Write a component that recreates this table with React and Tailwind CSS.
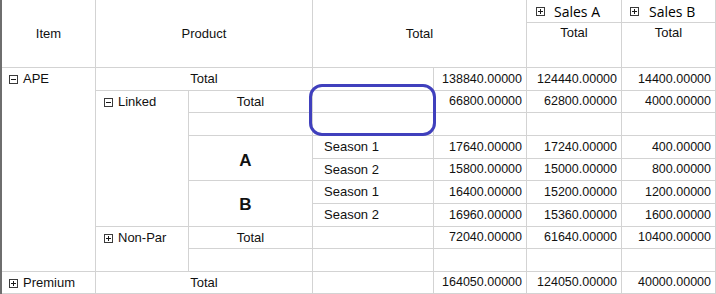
import React from 'react';

const BoxIcon = ({ plus }) => (
  <svg width="9" height="9" viewBox="0 0 9 9" className="shrink-0">
    <rect x="0.5" y="0.5" width="8" height="8" fill="white" stroke="#3a3a3a" />
    <line x1="2" y1="4.5" x2="7" y2="4.5" stroke="#1a1a1a" />
    {plus && <line x1="4.5" y1="2" x2="4.5" y2="7" stroke="#1a1a1a" />}
  </svg>
);

const Cell = ({ className = '', children }) => (
  <div className={`border-r border-b border-[#d3d3d3] ${className}`}>{children}</div>
);

const Num = ({ pos, children }) => (
  <Cell className={`${pos} flex items-center justify-end pr-[4px] text-[12.5px]`}>{children}</Cell>
);

const Tree = ({ plus, label, className = '' }) => (
  <div className={`h-[22px] flex items-center gap-[5px] ${className}`}>
    <BoxIcon plus={plus} />
    <span>{label}</span>
  </div>
);

const rows = [
  { r: 'row-start-6', season: 'Season 1', t: '17640.00000', a: '17240.00000', b: '400.00000' },
  { r: 'row-start-7', season: 'Season 2', t: '15800.00000', a: '15000.00000', b: '800.00000' },
  { r: 'row-start-8', season: 'Season 1', t: '16400.00000', a: '15200.00000', b: '1200.00000' },
  { r: 'row-start-9', season: 'Season 2', t: '16960.00000', a: '15360.00000', b: '1600.00000' },
];

export default function App() {
  return (
    <div
      className="relative w-[716px] h-[294px] bg-white text-[#111] text-[13px] overflow-hidden"
      style={{ fontFamily: '"Liberation Sans", Arial, sans-serif' }}
    >
      <div className="grid border-l-2 border-[#6e6e6e] grid-cols-[94px_93px_124px_121px_93px_95px_94px] grid-rows-[23px_45px_23px_22px_23px_23px_22px_23px_23px_22px_23px_22px]">
        {/* header */}
        <Cell className="col-start-1 row-start-1 row-span-2 flex items-center justify-center pt-[1px]">Item</Cell>
        <Cell className="col-start-2 col-span-2 row-start-1 row-span-2 flex items-center justify-center pt-[1px]">Product</Cell>
        <Cell className="col-start-4 col-span-2 row-start-1 row-span-2 flex items-center justify-center pt-[1px]">Total</Cell>
        <Cell className="col-start-6 row-start-1 flex items-center gap-[9px] pl-[9px]">
          <BoxIcon plus />
          <span className="text-[14px] text-black" style={{ fontFamily: '"Open Sans", sans-serif' }}>Sales A</span>
        </Cell>
        <Cell className="col-start-7 row-start-1 flex items-center gap-[10px] pl-[8px]">
          <BoxIcon plus />
          <span className="text-[14px] text-black" style={{ fontFamily: '"Open Sans", sans-serif' }}>Sales B</span>
        </Cell>
        <Cell className="col-start-6 row-start-2 text-center pt-[2px] leading-[16px]">Total</Cell>
        <Cell className="col-start-7 row-start-2 text-center pt-[2px] leading-[16px]">Total</Cell>

        {/* APE */}
        <Cell className="col-start-1 row-start-3 row-span-9 pl-[7px]">
          <Tree label="APE" />
        </Cell>
        <Cell className="col-start-2 col-span-2 row-start-3 flex items-center justify-center">Total</Cell>
        <Cell className="col-start-4 row-start-3" />
        <Num pos="col-start-5 row-start-3">138840.00000</Num>
        <Num pos="col-start-6 row-start-3">124440.00000</Num>
        <Num pos="col-start-7 row-start-3">14400.00000</Num>

        {/* Linked */}
        <Cell className="col-start-2 row-start-4 row-span-6 pl-[8px]">
          <Tree label="Linked" className="h-[20px]" />
        </Cell>
        <Cell className="col-start-3 row-start-4 flex items-center justify-center">Total</Cell>
        <Cell className="col-start-4 row-start-4" />
        <Num pos="col-start-5 row-start-4">66800.00000</Num>
        <Num pos="col-start-6 row-start-4">62800.00000</Num>
        <Num pos="col-start-7 row-start-4">4000.00000</Num>

        <Cell className="col-start-3 row-start-5" />
        <Cell className="col-start-4 row-start-5" />
        <Cell className="col-start-5 row-start-5" />
        <Cell className="col-start-6 row-start-5" />
        <Cell className="col-start-7 row-start-5" />

        <Cell className="col-start-3 row-start-6 row-span-2 flex items-center justify-center pt-[5px] pr-[10px] text-[17px] font-bold">A</Cell>
        <Cell className="col-start-3 row-start-8 row-span-2 flex items-center justify-center pt-[2px] pr-[10px] text-[17px] font-bold">B</Cell>

        {rows.map((row) => (
          <React.Fragment key={row.r}>
            <Cell className={`col-start-4 ${row.r} flex items-center pl-[11px]`}>{row.season}</Cell>
            <Num pos={`col-start-5 ${row.r}`}>{row.t}</Num>
            <Num pos={`col-start-6 ${row.r}`}>{row.a}</Num>
            <Num pos={`col-start-7 ${row.r}`}>{row.b}</Num>
          </React.Fragment>
        ))}

        {/* Non-Par */}
        <Cell className="col-start-2 row-start-10 row-span-2 pl-[8px]">
          <Tree plus label="Non-Par" />
        </Cell>
        <Cell className="col-start-3 row-start-10 flex items-center justify-center">Total</Cell>
        <Cell className="col-start-4 row-start-10" />
        <Num pos="col-start-5 row-start-10">72040.00000</Num>
        <Num pos="col-start-6 row-start-10">61640.00000</Num>
        <Num pos="col-start-7 row-start-10">10400.00000</Num>

        <Cell className="col-start-3 row-start-11" />
        <Cell className="col-start-4 row-start-11" />
        <Cell className="col-start-5 row-start-11" />
        <Cell className="col-start-6 row-start-11" />
        <Cell className="col-start-7 row-start-11" />

        {/* Premium */}
        <Cell className="col-start-1 row-start-12 pl-[7px]">
          <Tree plus label="Premium" className="h-[21px]" />
        </Cell>
        <Cell className="col-start-2 col-span-2 row-start-12 flex items-center justify-center">Total</Cell>
        <Cell className="col-start-4 row-start-12" />
        <Num pos="col-start-5 row-start-12">164050.00000</Num>
        <Num pos="col-start-6 row-start-12">124050.00000</Num>
        <Num pos="col-start-7 row-start-12">40000.00000</Num>
      </div>

      {/* highlight */}
      <div className="absolute left-[309px] top-[84px] w-[127px] h-[52px] rounded-[13px] border-[3px] border-[#4040bd]" />
    </div>
  );
}
